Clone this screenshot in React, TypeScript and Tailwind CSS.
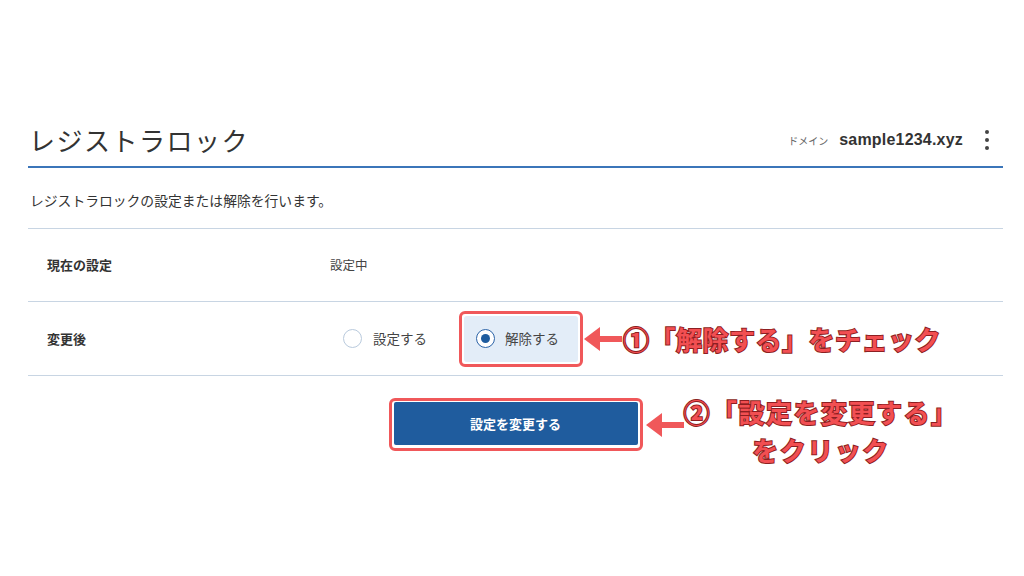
const jp = "font-['Noto_Sans_CJK_JP',sans-serif]";

function Arrow({ w }: { w: number }) {
  return (
    <svg width={w} height="26" viewBox={`0 0 ${w} 26`} className="shrink-0">
      <polygon points={`0,13 16,1 16,10 ${w},10 ${w},16 16,16 16,25`} fill="#f0585a" />
    </svg>
  );
}

function Radio({ checked }: { checked: boolean }) {
  return (
    <span className={`w-[19px] h-[19px] rounded-full border flex items-center justify-center shrink-0 bg-white ${checked ? "border-[#2c64a8] border-[1.5px]" : "border-[#b9cadd]"}`}>
      {checked && <span className="w-[9px] h-[9px] rounded-full bg-[#1f5c9e]" />}
    </span>
  );
}

const note = "text-[26px] leading-[38px] font-bold text-[#f24f52] [-webkit-text-stroke:2px_#8c1f22] [paint-order:stroke_fill] whitespace-nowrap";

export default function App() {
  return (
    <div className={`w-[1024px] h-[576px] bg-white overflow-hidden ${jp} text-[#333]`}>
      <div className="w-[975px] ml-[28px] pt-[122px]">
        <div className="flex items-center justify-between border-b-2 border-[#3b75b9] pb-[8px]">
          <h1 className="text-[26px] leading-[36px] tracking-[1.5px] pl-[1px] text-[#333]">レジストラロック</h1>
          <div className="flex items-center pr-[14px]">
            <span className="text-[10px] text-[#666]">ドメイン</span>
            <span className="ml-[11px] text-[16px] tracking-[0.2px] font-bold font-['Liberation_Sans',sans-serif] text-[#333]">sample1234.xyz</span>
            <div className="ml-[22px] flex flex-col gap-[4px]">
              <span className="w-[4px] h-[4px] rounded-full bg-[#444]" />
              <span className="w-[4px] h-[4px] rounded-full bg-[#444]" />
              <span className="w-[4px] h-[4px] rounded-full bg-[#444]" />
            </div>
          </div>
        </div>

        <p className="mt-[22px] pl-[2px] text-[13.8px] leading-[20px] text-[#333]">レジストラロックの設定または解除を行います。</p>

        <div className="mt-[18px] border-t border-[#c8d5e3]">
          <div className="flex items-center h-[73px] border-b border-[#c8d5e3]">
            <div className="w-[302px] pl-[19px] text-[13px] font-bold">現在の設定</div>
            <div className="text-[12.5px] text-[#444]">設定中</div>
          </div>
          <div className="flex items-center h-[74px] border-b border-[#c8d5e3]">
            <div className="w-[302px] pl-[19px] text-[13px] font-bold">変更後</div>
            <div className="flex items-center">
              <div className="flex items-center h-[46px] pl-[13px] pr-[16px] gap-[11px]">
                <Radio checked={false} />
                <span className="text-[13.5px] text-[#444]">設定する</span>
              </div>
              <div className="relative ml-[21px]">
                <div className="flex items-center h-[46px] pl-[12px] pr-[19px] gap-[10px] bg-[#e3edf8] rounded-[3px]">
                  <Radio checked />
                  <span className="text-[13.5px] text-[#444]">解除する</span>
                </div>
                <div className="absolute -inset-[5px] border-[3px] border-[#f0585a] rounded-[6px]" />
              </div>
              <div className="flex items-center ml-[6px]">
                <Arrow w={38} />
                <span className={`${note} ml-[1px] tracking-[0.5px]`}>①「解除する」をチェック</span>
              </div>
            </div>
          </div>
        </div>

        <div className="flex justify-center mt-[27px]">
          <div className="relative">
            <button className="w-[244px] h-[43px] bg-[#1f5c9e] text-white text-[13px] font-bold rounded-[2px] -translate-y-[1px]">設定を変更する</button>
            <div className="absolute -inset-[5px] border-[3px] border-[#f0585a] rounded-[6px]" />
            <div className="absolute left-full top-0 ml-[8px] flex">
              <div className="pt-[9px]"><Arrow w={38} /></div>
              <div className="flex flex-col items-center -mt-[10px] tracking-[1.5px]">
                <span className={note}>②「設定を変更する」</span>
                <span className={note}>をクリック</span>
              </div>
            </div>
          </div>
        </div>
      </div>
    </div>
  );
}
